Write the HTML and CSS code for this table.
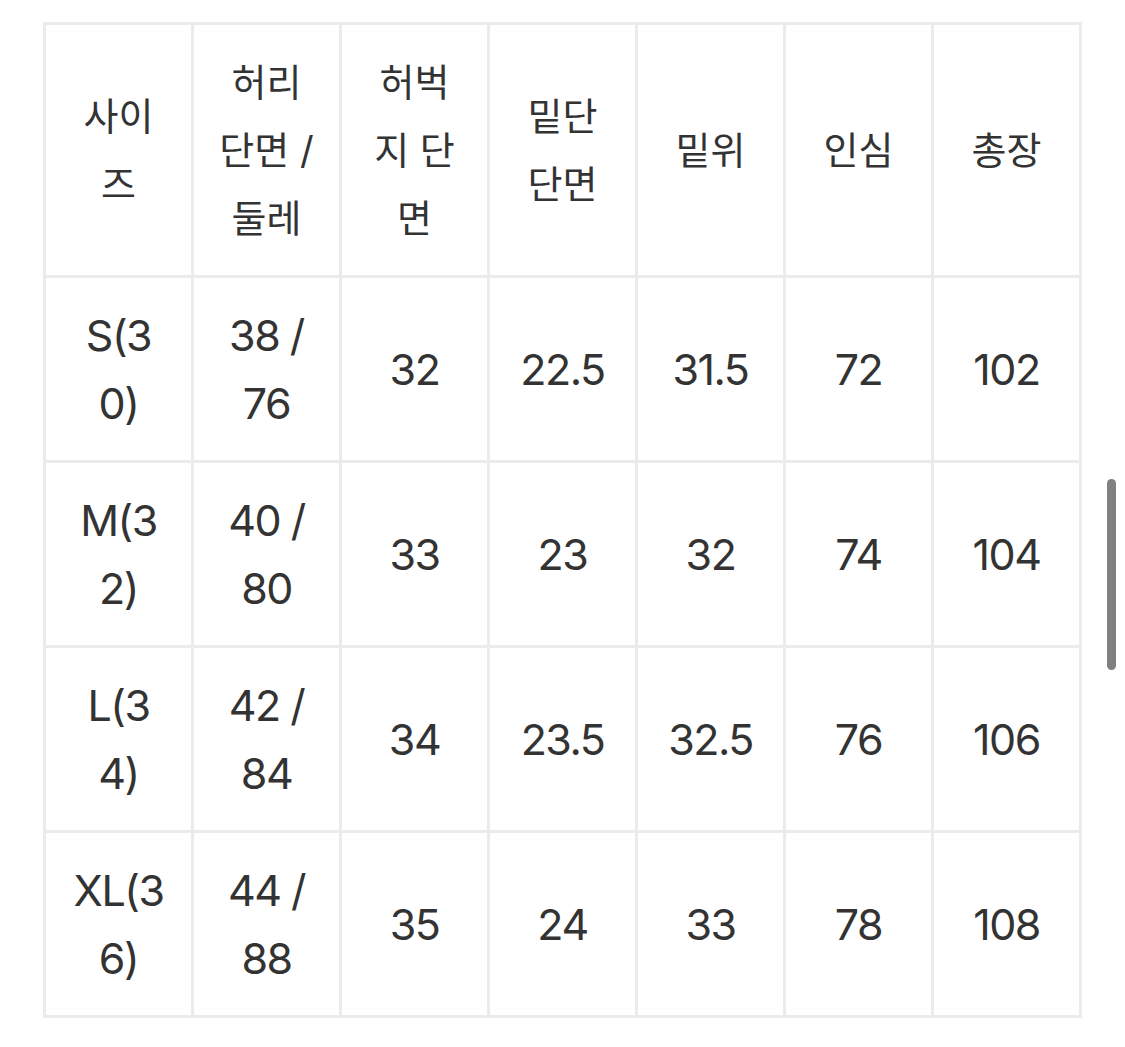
FILE: index.html
```html
<!DOCTYPE html>
<html lang="ko">
<head>
<meta charset="utf-8">
<title>사이즈</title>
<link rel="stylesheet" href="styles.css">
</head>
<body>
<div class="page">
  <table class="size-table">
    <thead>
      <tr>
        <th>사이즈</th>
        <th>허리 단면 / 둘레</th>
        <th>허벅지 단면</th>
        <th>밑단 단면</th>
        <th>밑위</th>
        <th>인심</th>
        <th>총장</th>
      </tr>
    </thead>
    <tbody>
      <tr><td>S(30)</td><td>38 / 76</td><td>32</td><td>22.5</td><td>31.5</td><td>72</td><td>102</td></tr>
      <tr><td>M(32)</td><td>40 / 80</td><td>33</td><td>23</td><td>32</td><td>74</td><td>104</td></tr>
      <tr><td>L(34)</td><td>42 / 84</td><td>34</td><td>23.5</td><td>32.5</td><td>76</td><td>106</td></tr>
      <tr><td>XL(36)</td><td>44 / 88</td><td>35</td><td>24</td><td>33</td><td>78</td><td>108</td></tr>
    </tbody>
  </table>
  <div class="scrollbar"></div>
</div>
</body>
</html>
```

FILE: styles.css
```css
html, body {
  margin: 0;
  padding: 0;
  background: #ffffff;
}

.page {
  position: relative;
  width: 1125px;
  height: 1047px;
  padding: 22px 43px 0 43px;
  box-sizing: border-box;
}

.size-table {
  width: 1039px;
  table-layout: fixed;
  border-collapse: collapse;
  color: #333333;
  font-family: "Inter", "Noto Sans CJK KR", sans-serif;
  font-variant-numeric: proportional-nums;
}

.size-table th,
.size-table td {
  border: 3px solid #ebebeb;
  padding: 23px 24px;
  text-align: center;
  vertical-align: middle;
  line-height: 68px;
  word-break: break-all;
}

.size-table th {
  font-weight: 400;
  font-size: 38px;
  height: 204px;
}

.size-table td {
  font-size: 43px;
  letter-spacing: -1.5px;
  height: 136px;
}

.scrollbar {
  position: absolute;
  left: 1107px;
  top: 479px;
  width: 9px;
  height: 191px;
  border-radius: 5px;
  background: #808080;
}
```
